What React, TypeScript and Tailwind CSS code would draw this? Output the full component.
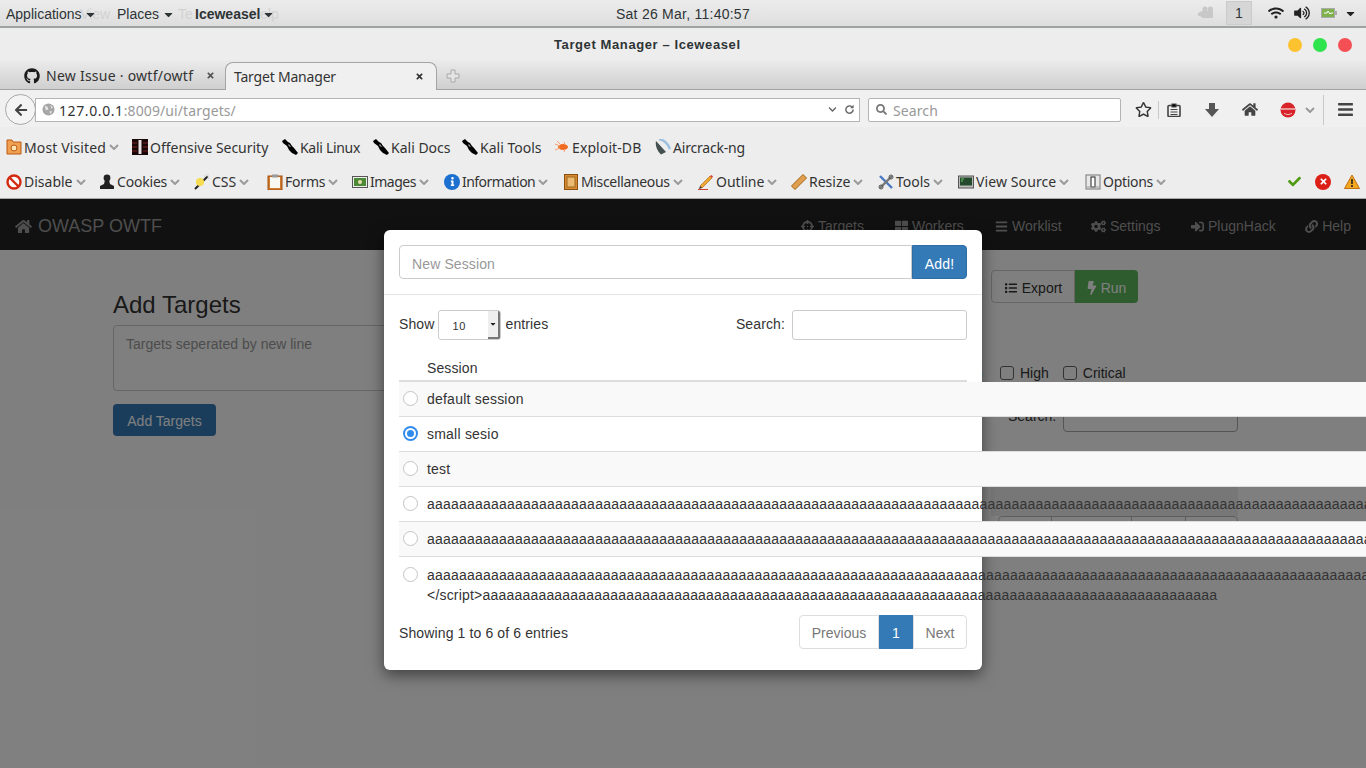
import type { ReactNode } from 'react';
import {
  FaArrowLeft,
  FaBars,
  FaBolt,
  FaCaretDown,
  FaCheck,
  FaChevronDown,
  FaCogs,
  FaCrosshairs,
  FaGithub,
  FaHome,
  FaInfo,
  FaLink,
  FaList,
  FaRegStar,
  FaSearch,
  FaSignInAlt,
  FaThLarge,
  FaTimes,
  FaVolumeUp,
  FaWifi,
} from 'react-icons/fa';

const chromeFont = 'font-["Noto_Sans",sans-serif]';

function Chevron({ className = '' }: { className?: string }) {
  return (
    <svg viewBox="0 0 10 6" className={`w-[10px] h-[6px] shrink-0 ${className}`}>
      <path d="M1 1l4 4 4-4" fill="none" stroke="#9a9a9a" strokeWidth="2" />
    </svg>
  );
}

function KaliIcon() {
  return (
    <svg viewBox="0 0 16 16" className="w-4 h-4">
      <path d="M0 2l3-2 3 3 2 1 2 3 2 2 4 5-2 2-4-2-3-3-2-4-4-3z" fill="#000" />
      <path d="M6 6l1-1 2 3-1 0z" fill="#999" />
    </svg>
  );
}

function FolderIcon() {
  return (
    <svg viewBox="0 0 16 16" className="w-4 h-4">
      <path d="M1 1h5l1 2h8v12H1z" fill="#f0a050" stroke="#b85a10" />
      <circle cx="8" cy="9" r="3" fill="#fde0b0" stroke="#b85a10" />
    </svg>
  );
}

function OffsecIcon() {
  return (
    <svg viewBox="0 0 16 16" className="w-4 h-4">
      <rect width="16" height="16" fill="#1a0808" />
      <path d="M0 4h5M0 8h5M0 12h5M11 4h5M11 8h5M11 12h5" stroke="#7a2020" />
      <rect x="6.5" y="1" width="3" height="14" fill="#e8e0e0" />
    </svg>
  );
}

function ExploitIcon() {
  return (
    <svg viewBox="0 0 16 16" className="w-4 h-4">
      <ellipse cx="9" cy="8" rx="5" ry="3" fill="#f06a20" />
      <path d="M1 5l5 2M1 11l5-2M3 2l4 4M10 3l1 3M10 13l1-3" stroke="#f8a070" strokeWidth="1" />
    </svg>
  );
}

function AircrackIcon() {
  return (
    <svg viewBox="0 0 16 16" className="w-4 h-4">
      <path d="M1 2l10 11-5 2.5C2 12 0 6 1 2z" fill="#44504f" />
      <path d="M4 0c5 1 9 5 11 10" fill="none" stroke="#9cc0e0" strokeWidth="2.4" />
    </svg>
  );
}

function DisableIcon() {
  return (
    <svg viewBox="0 0 16 16" className="w-4 h-4">
      <circle cx="8" cy="8" r="6.5" fill="#fff" stroke="#d42a10" strokeWidth="2.4" />
      <path d="M3.5 3.5l9 9" stroke="#d42a10" strokeWidth="2.4" />
    </svg>
  );
}

function CookieIcon() {
  return (
    <svg viewBox="0 0 16 16" className="w-4 h-4">
      <circle cx="8" cy="4" r="3.4" fill="#222" />
      <path d="M6 6h4l1 4 4 2v3H1v-3l4-2z" fill="#222" />
    </svg>
  );
}

function CssIcon() {
  return (
    <svg viewBox="0 0 16 16" className="w-4 h-4">
      <path d="M1 15L14 2" stroke="#222" strokeWidth="2" />
      <path d="M10 2L14 1 15 5" stroke="#ddd" strokeWidth="1.5" fill="none" />
      <circle cx="6" cy="8" r="4" fill="#f6dc50" />
    </svg>
  );
}

function FormsIcon() {
  return (
    <svg viewBox="0 0 16 16" className="w-4 h-4">
      <rect x="1" y="2" width="14" height="14" fill="#d07a30" stroke="#a05010" />
      <rect x="3" y="3" width="10" height="11" fill="#f8f8f0" />
      <rect x="5" y="0.5" width="6" height="3" fill="#999" />
    </svg>
  );
}

function ImagesIcon() {
  return (
    <svg viewBox="0 0 16 16" className="w-4 h-4">
      <rect x="0.5" y="2.5" width="15" height="11" fill="#eee" stroke="#555" />
      <rect x="2" y="4" width="12" height="8" fill="#4c8a38" />
      <circle cx="8" cy="8" r="2" fill="#e8e0b0" />
    </svg>
  );
}

function InfoIcon() {
  return (
    <span className="w-4 h-4 rounded-full bg-[#1c70d0] flex items-center justify-center">
      <FaInfo className="w-[9px] h-[9px] text-white" />
    </span>
  );
}

function MiscIcon() {
  return (
    <svg viewBox="0 0 16 16" className="w-4 h-4">
      <rect x="1.5" y="0.5" width="13" height="15" fill="#d88a30" stroke="#8a5010" />
      <rect x="4" y="3" width="8" height="10" fill="#eaba70" stroke="#a06820" />
    </svg>
  );
}

function OutlineIcon() {
  return (
    <svg viewBox="0 0 16 16" className="w-4 h-4">
      <path d="M2 12L12 2l2 2L4 14z" fill="#f0a830" stroke="#a06010" strokeWidth="0.6" />
      <path d="M12 2l2 2 1-1.5L13.5 1z" fill="#e04040" />
      <path d="M0 15.5h10" stroke="#d04030" />
      <path d="M2 12l-1 3 3-1z" fill="#333" />
    </svg>
  );
}

function ResizeIcon() {
  return (
    <svg viewBox="0 0 16 16" className="w-4 h-4">
      <path d="M0.5 12L12 0.5 15.5 4 4 15.5z" fill="#e0a050" stroke="#a06010" />
    </svg>
  );
}

function ToolsIcon() {
  return (
    <svg viewBox="0 0 16 16" className="w-4 h-4">
      <path d="M2 2l12 12" stroke="#4a78c0" strokeWidth="2.4" />
      <path d="M14 2L2 14" stroke="#777" strokeWidth="2.4" />
      <circle cx="13" cy="3" r="2" fill="none" stroke="#555" />
      <circle cx="3" cy="13" r="2" fill="none" stroke="#555" />
    </svg>
  );
}

function SourceIcon() {
  return (
    <svg viewBox="0 0 16 16" className="w-4 h-4">
      <rect x="0.5" y="2" width="15" height="12" fill="#bbb" stroke="#555" />
      <rect x="2" y="3.5" width="12" height="8" fill="#234a2c" />
      <path d="M3 5h3M3 7h2" stroke="#80e080" strokeWidth="0.8" />
    </svg>
  );
}

function OptionsIcon() {
  return (
    <svg viewBox="0 0 16 16" className="w-4 h-4">
      <rect x="1" y="1" width="14" height="14" fill="#e8e8e8" stroke="#777" />
      <rect x="6" y="3" width="4" height="10" fill="#fff" stroke="#222" />
      <path d="M2 13h12" stroke="#999" />
    </svg>
  );
}

function Bookmark({
  icon,
  label,
  chevron,
  className,
  labelClass = '',
}: {
  icon: ReactNode;
  label: string;
  chevron?: boolean;
  className: string;
  labelClass?: string;
}) {
  return (
    <div className={`flex items-center gap-[2px] shrink-0 ${className}`}>
      {icon}
      <span className={`whitespace-nowrap ${labelClass}`}>{label}</span>
      {chevron && <Chevron className="ml-[1px]" />}
    </div>
  );
}

function TopBar() {
  return (
    <div className="relative h-[28px] shrink-0 flex items-center bg-gradient-to-b from-[#ececec] to-[#dedede] border-b-2 border-[#9fa3a0] font-['Liberation_Sans',sans-serif] text-[14px] text-[#2e3436]">
      {/* terminal menu showing through the panel */}
      <div className="absolute left-[80px] top-[4px] text-[#d2d2d2] whitespace-nowrap flex">
        <span className="w-[98px]">View</span>
        <span className="w-[72px]">Te</span>
        <span>Help</span>
      </div>
      <div className="relative flex items-center ml-[6px] w-[111px] pt-[2px]">
        <span>Applications</span>
        <FaCaretDown className="ml-[2px] w-[13px] h-[13px]" />
      </div>
      <div className="relative flex items-center w-[78px] pt-[2px]">
        <span>Places</span>
        <FaCaretDown className="ml-[3px] w-[13px] h-[13px]" />
      </div>
      <div className="relative flex items-center font-bold pt-[2px]">
        <span>Iceweasel</span>
        <FaCaretDown className="ml-[2px] w-[13px] h-[13px]" />
      </div>
      <span className="absolute left-[616px] top-[4px] tracking-[0.25px] whitespace-nowrap">Sat 26 Mar, 11:40:57</span>
      <div className="ml-auto flex items-center">
        <svg viewBox="0 0 16 14" className="w-[16px] h-[14px]">
          <path d="M0 7l4-2v6l-4-1.5z" fill="#c8c8c8" />
          <rect x="4" y="5" width="11" height="7" fill="#c8c8c8" />
          <circle cx="7" cy="3" r="2.6" fill="#c8c8c8" />
          <circle cx="12.4" cy="3" r="2.6" fill="#c8c8c8" />
        </svg>
        <div className="ml-[12px] w-[26px] h-[24px] bg-[#d6d6d6] border border-[#cbcbcb] flex items-center justify-center pt-[1px]">1</div>
        <FaWifi className="ml-[16px] w-[16px] h-[14px] text-[#222]" />
        <FaVolumeUp className="ml-[10px] w-[16px] h-[14px] text-[#222]" />
        <svg viewBox="0 0 16 12" className="ml-[11px] w-[16px] h-[12px]">
          <rect x="0.5" y="1.5" width="13" height="9" fill="#7eb04c" stroke="#aaa" />
          <rect x="14" y="4" width="2" height="4" fill="#aaa" />
          <path d="M3 6h3l1-2 2 3 1-1h2" stroke="#fff" fill="none" />
        </svg>
        <FaCaretDown className="ml-[7px] mr-[9px] w-[13px] h-[13px] text-[#222]" />
      </div>
    </div>
  );
}

function TitleAndTabs() {
  return (
    <div className={`h-[62px] shrink-0 flex flex-col bg-gradient-to-b from-[#ededed] from-50% to-[#cfcfcf] border-b border-[#a4a4a4] ${chromeFont}`}>
      <div className="h-[34px] flex items-center relative">
        <span className="ml-[554px] text-[13px] font-bold text-[#2e3436] font-['Liberation_Sans',sans-serif] tracking-[0.6px] whitespace-nowrap">Target Manager – Iceweasel</span>
        <div className="ml-auto mr-[14px] flex gap-[11px]">
          <span className="w-[14px] h-[14px] rounded-full bg-[#fdc22f]" />
          <span className="w-[14px] h-[14px] rounded-full bg-[#2fe34c]" />
          <span className="w-[14px] h-[14px] rounded-full bg-[#f44f55]" />
        </div>
      </div>
      <div className="flex-1 flex items-end text-[14px] text-[#333]">
        <div className="ml-[24px] w-[201px] h-[27px] flex items-center">
          <FaGithub className="w-[16px] h-[16px] text-[#1a1a1a]" />
          <span className="ml-[6px] tracking-[0.25px] whitespace-nowrap">New Issue · owtf/owtf</span>
          <FaTimes className="ml-auto mr-[10px] w-[9px] h-[9px] text-[#555]" />
        </div>
        <div className="w-[212px] h-[28px] -mb-px flex items-center bg-[#f0f0f0] border border-b-0 border-[#a4a4a4] rounded-t-[8px] px-[8px]">
          <span className="tracking-[-0.2px]">Target Manager</span>
          <FaTimes className="ml-auto mr-[4px] w-[9px] h-[9px] text-[#333]" />
        </div>
        <div className="ml-[9px] h-[27px] flex items-center">
          <svg viewBox="0 0 14 14" className="w-[14px] h-[14px]">
            <path d="M5 1h4v4h4v4H9v4H5V9H1V5h4z" fill="#e4e4e4" stroke="#a8a8a8" />
          </svg>
        </div>
      </div>
    </div>
  );
}

function NavBar() {
  return (
    <div className={`h-[37px] shrink-0 relative flex items-center bg-[#f0f0f0] pt-[2px] text-[14px] ${chromeFont}`}>
      <div className="absolute left-[5px] top-[4px] w-[31px] h-[31px] rounded-full bg-[#f4f4f4] border border-[#a8a8a8] flex items-center justify-center">
        <FaArrowLeft className="w-[14px] h-[14px] text-[#444]" />
      </div>
      <div className="ml-[35px] w-[825px] h-[24px] bg-white border border-[#b4b4b4] flex items-center pl-[6px] pr-[4px]">
        <svg viewBox="0 0 14 14" className="w-[13px] h-[13px] shrink-0">
          <circle cx="7" cy="7" r="6.5" fill="#a6a6a6" />
          <path d="M3 3l3 1 1 3-3 1zM9 2l3 3-2 1zM8 9l3 0-2 3z" fill="#e4e4e4" />
        </svg>
        <span className="ml-[4px] mt-[2px] tracking-[0.6px] text-[#333]">127.0.0.1<span className="text-[#999] tracking-[0.1px]">:8009/ui/targets/</span></span>
        <FaChevronDown className="ml-auto w-[9px] h-[9px] text-[#666]" />
        <svg viewBox="0 0 12 12" className="ml-[7px] w-[11px] h-[11px]">
          <path d="M10 6a4 4 0 1 1-1.2-2.8" fill="none" stroke="#666" strokeWidth="1.6" />
          <path d="M10.5 0.8v3.8H6.7z" fill="#666" />
        </svg>
      </div>
      <div className="ml-[8px] w-[253px] h-[24px] bg-white border border-[#b4b4b4] rounded-[2px] flex items-center pl-[7px] text-[#999]">
        <FaSearch className="w-[11px] h-[11px] text-[#777]" />
        <span className="ml-[6px] mt-[2px] tracking-[0.1px]">Search</span>
      </div>
      <FaRegStar className="ml-[14px] w-[17px] h-[17px] text-[#333]" />
      <span className="ml-[6px] w-px h-[18px] bg-[#c8c8c8]" />
      <svg viewBox="0 0 14 14" className="ml-[8px] w-[14px] h-[14px]">
        <rect x="1" y="2.5" width="12" height="11" rx="1" fill="none" stroke="#444" strokeWidth="1.6" />
        <path d="M5 1h4v3H5zM3.5 6.5h7M3.5 9h7M3.5 11.5h7" stroke="#444" strokeWidth="1.2" />
      </svg>
      <svg viewBox="0 0 14 14" className="ml-[24px] w-[14px] h-[14px]">
        <path d="M4 0h6v6h4l-7 8-7-8h4z" fill="#555" />
      </svg>
      <FaHome className="ml-[23px] w-[16px] h-[15px] text-[#444]" />
      <svg viewBox="0 0 16 16" className="ml-[22px] w-[16px] h-[16px]">
        <circle cx="8" cy="8" r="7.5" fill="#d8232a" />
        <path d="M1 7h14" stroke="#f4c8c8" strokeWidth="1.4" />
        <path d="M4 11c2 2 6 2 8 0" stroke="#f4c8c8" fill="none" />
      </svg>
      <Chevron className="ml-[9px]" />
      <span className="ml-[8px] w-px h-[30px] bg-[#c8c8c8]" />
      <FaBars className="ml-[13px] w-[17px] h-[17px] text-[#444]" />
    </div>
  );
}

function BookmarksBar() {
  return (
    <div className={`h-[38px] shrink-0 flex items-center bg-[#ededed] pl-[6px] pt-[2px] text-[14px] text-[#333] ${chromeFont}`}>
      <Bookmark icon={<FolderIcon />} label="Most Visited" chevron className="w-[126px]" labelClass="tracking-[0.12px]" />
      <Bookmark icon={<OffsecIcon />} label="Offensive Security" className="w-[150px]" labelClass="tracking-[-0.02px]" />
      <Bookmark icon={<KaliIcon />} label="Kali Linux" className="w-[91px]" labelClass="tracking-[-0.3px]" />
      <Bookmark icon={<KaliIcon />} label="Kali Docs" className="w-[89px]" />
      <Bookmark icon={<KaliIcon />} label="Kali Tools" className="w-[92px]" />
      <Bookmark icon={<ExploitIcon />} label="Exploit-DB" className="w-[101px]" labelClass="tracking-[0.1px]" />
      <Bookmark icon={<AircrackIcon />} label="Aircrack-ng" className="w-[95px]" labelClass="tracking-[-0.2px]" />
    </div>
  );
}

function DevToolbar() {
  return (
    <div className={`h-[34px] shrink-0 flex items-center bg-[#ededed] border-b border-[#a8a8a8] pl-[6px] text-[14px] text-[#333] ${chromeFont}`}>
      <Bookmark icon={<DisableIcon />} label="Disable" chevron className="w-[93px]" />
      <Bookmark icon={<CookieIcon />} label="Cookies" chevron className="w-[95px]" labelClass="tracking-[-0.2px]" />
      <Bookmark icon={<CssIcon />} label="CSS" chevron className="w-[73px]" />
      <Bookmark icon={<FormsIcon />} label="Forms" chevron className="w-[85px]" labelClass="tracking-[-0.2px]" />
      <Bookmark icon={<ImagesIcon />} label="Images" chevron className="w-[92px]" labelClass="tracking-[-0.5px]" />
      <Bookmark icon={<InfoIcon />} label="Information" chevron className="w-[119px]" labelClass="tracking-[-0.55px]" />
      <Bookmark icon={<MiscIcon />} label="Miscellaneous" chevron className="w-[135px]" labelClass="tracking-[-0.35px]" />
      <Bookmark icon={<OutlineIcon />} label="Outline" chevron className="w-[93px]" />
      <Bookmark icon={<ResizeIcon />} label="Resize" chevron className="w-[87px]" />
      <Bookmark icon={<ToolsIcon />} label="Tools" chevron className="w-[80px]" />
      <Bookmark icon={<SourceIcon />} label="View Source" chevron className="w-[127px]" labelClass="tracking-[0.1px]" />
      <Bookmark icon={<OptionsIcon />} label="Options" chevron className="w-[100px]" labelClass="tracking-[-0.3px]" />
      <div className="ml-auto mr-[6px] flex items-center gap-[13px]">
        <FaCheck className="w-[15px] h-[13px] text-[#4f9a10]" />
        <span className="w-[16px] h-[16px] rounded-full bg-[#dc2018] flex items-center justify-center">
          <FaTimes className="w-[9px] h-[9px] text-white" />
        </span>
        <svg viewBox="0 0 16 15" className="w-[16px] h-[15px]">
          <path d="M8 1l7.5 13.5H.5z" fill="#f4a820" stroke="#c07010" />
          <path d="M8 5v5M8 11v2" stroke="#222" strokeWidth="1.6" />
        </svg>
      </div>
    </div>
  );
}

const siteLinks = [
  { icon: <FaCrosshairs className="w-[13px] h-[13px]" />, label: 'Targets', className: 'w-[94px]' },
  { icon: <FaThLarge className="w-[13px] h-[13px]" />, label: 'Workers', className: 'w-[100px]' },
  { icon: <FaBars className="w-[13px] h-[13px]" />, label: 'Worklist', className: 'w-[96px]' },
  { icon: <FaCogs className="w-[15px] h-[13px]" />, label: 'Settings', className: 'w-[100px]' },
  { icon: <FaSignInAlt className="w-[13px] h-[13px]" />, label: 'PlugnHack', className: 'w-[114px]' },
  { icon: <FaLink className="w-[14px] h-[13px]" />, label: 'Help', className: 'w-[46px]' },
];

function SitePage() {
  return (
    <div className="h-full bg-white font-['Liberation_Sans',sans-serif] text-[14px] text-[#333]">
      <div className="h-[51px] bg-[#222] flex items-center pt-[4px] text-[#9d9d9d]">
        <div className="ml-[15px] flex items-center gap-[6px] text-[18px]">
          <FaHome className="w-[17px] h-[15px]" />
          <span>OWASP OWTF</span>
        </div>
        <div className="ml-auto flex">
          {siteLinks.map((link) => (
            <div key={link.label} className={`flex items-center gap-[4px] ${link.className}`}>
              {link.icon}
              <span>{link.label}</span>
            </div>
          ))}
        </div>
        <div className="w-[15px]" />
      </div>
      <div className="flex">
        <div className="ml-[113px] w-[400px] pt-[40px]">
          <h1 className="text-[24px] leading-[29px]">Add Targets</h1>
          <div className="mt-[6px] h-[66px] border border-[#ccc] rounded-[4px] px-[12px] py-[6px] text-[#999] leading-[24px]">Targets seperated by new line</div>
          <div className="mt-[13px] w-[103px] h-[32px] rounded-[4px] bg-[#337ab7] text-white flex items-center justify-center pt-[3px]">Add Targets</div>
        </div>
        <div className="ml-[478px] w-[247px] pt-[20px]">
          <div className="flex h-[33px]">
            <div className="w-[84px] border border-[#ccc] rounded-l-[4px] flex items-center justify-center gap-[4px] pt-[3px]">
              <FaList className="w-[14px] h-[12px]" />
              Export
            </div>
            <div className="w-[63px] bg-[#5cb85c] text-white rounded-r-[4px] flex items-center justify-center gap-[4px] pt-[3px]">
              <FaBolt className="w-[10px] h-[14px]" />
              Run
            </div>
          </div>
          <div className="mt-[60px] h-[20px] flex items-center">
            <span className="-ml-[16px] w-[9px] pt-[1px]">n</span>
            <span className="ml-[16px] w-[14px] h-[14px] border border-[#666] rounded-[3px]" />
            <span className="ml-[6px] pt-[1px]">High</span>
            <span className="ml-[14px] w-[14px] h-[14px] border border-[#666] rounded-[3px]" />
            <span className="ml-[6px] pt-[1px]">Critical</span>
          </div>
          <div className="mt-[17px] flex items-center ml-[17px]">
            <span>Search:</span>
            <div className="ml-[7px] w-[175px] h-[32px] border border-[#aaa] rounded-[4px]" />
          </div>
          <div className="mt-[55px] h-[29px] w-[247px] bg-[#eee]" />
          <div className="ml-[7px] flex h-[20px] border border-[#bbb] rounded-t-[4px]">
            <div className="w-[53px] border-r border-[#bbb]" />
            <div className="w-[80px] border-r border-[#bbb]" />
            <div className="w-[54px] border-r border-[#bbb]" />
          </div>
        </div>
      </div>
    </div>
  );
}

const sessions = [
  { name: 'default session', checked: false },
  { name: 'small sesio', checked: true },
  { name: 'test', checked: false },
  { name: 'a'.repeat(119), checked: false },
  { name: 'a'.repeat(119), checked: false },
];

function Radio({ checked }: { checked: boolean }) {
  if (checked) {
    return (
      <span className="mt-[2px] w-[15px] h-[15px] rounded-full bg-[#2f8cec] flex items-center justify-center shrink-0">
        <span className="w-[11px] h-[11px] rounded-full bg-white flex items-center justify-center">
          <span className="w-[7px] h-[7px] rounded-full bg-[#2f8cec]" />
        </span>
      </span>
    );
  }
  return <span className="mt-[2px] w-[15px] h-[15px] rounded-full bg-white border border-[#c4c4c4] shrink-0" />;
}

function SessionModal() {
  return (
    <div className="absolute left-[384px] top-[31px] w-[598px] h-[440px] bg-white rounded-[6px] shadow-[0_5px_15px_rgba(0,0,0,0.5)] font-['Liberation_Sans',sans-serif] text-[14px] text-[#333] tracking-[0.12px]">
      <div className="h-[65px] border-b border-[#e5e5e5] px-[15px] pt-[15px]">
        <div className="flex h-[34px]">
          <div className="flex-1 border border-[#ccc] rounded-l-[4px] px-[12px] pt-[4px] flex items-center text-[#999]">New Session</div>
          <div className="w-[55px] bg-[#337ab7] border border-[#2e6da4] rounded-r-[4px] pt-[4px] text-white flex items-center justify-center">Add!</div>
        </div>
      </div>
      <div className="px-[15px]">
        <div className="mt-[15px] h-[30px] flex items-center">
          <span className="-mt-[2px]">Show</span>
          <div className="ml-[3px] w-[63px] h-[30px] border border-[#ccc] rounded-[3px] flex items-center overflow-hidden">
            <span className="ml-[14px] mt-[3px] text-[11px] tracking-[0.5px] flex-1">10</span>
            <div className="w-[12px] h-full bg-[#eee] border-r-2 border-b-2 border-[#777] flex items-center justify-center">
              <FaCaretDown className="w-[8px] h-[8px] text-[#222]" />
            </div>
          </div>
          <span className="ml-[5px] -mt-[2px]">entries</span>
          <span className="ml-auto -mt-[2px]">Search:</span>
          <div className="ml-[7px] w-[175px] h-[30px] border border-[#ccc] rounded-[3px]" />
        </div>
        <div className="mt-[14px] h-[28px] pl-[28px] pt-[2px] border-b-2 border-[#ddd] flex items-center leading-[20px]">Session</div>
        {sessions.map((session, i) => (
          <div
            key={i}
            className={`h-[35px] w-[1000px] border-b border-[#ddd] flex pt-[7px] pl-[4px] gap-[9px] whitespace-nowrap leading-[20px] tracking-[0.22px] ${i % 2 === 0 ? 'bg-[#f9f9f9]' : ''}`}
          >
            <Radio checked={session.checked} />
            <span>{session.name}</span>
          </div>
        ))}
        <div className="w-[1000px] flex pt-[8px] pl-[4px] gap-[9px] whitespace-nowrap leading-[20px] tracking-[0.2px]">
          <Radio checked={false} />
          <div>
            <div>{'a'.repeat(119)}</div>
            <div>{'</script>' + 'a'.repeat(92)}</div>
          </div>
        </div>
        <div className="mt-[10px] flex items-center justify-between">
          <span className="pt-[2px]">Showing 1 to 6 of 6 entries</span>
          <div className="flex h-[34px] tracking-normal">
            <div className="w-[80px] border border-[#ddd] rounded-l-[4px] pt-[3px] text-[#777] flex items-center justify-center">Previous</div>
            <div className="w-[34px] bg-[#337ab7] pt-[3px] text-white flex items-center justify-center">1</div>
            <div className="w-[54px] border border-[#ddd] rounded-r-[4px] pt-[3px] text-[#777] flex items-center justify-center">Next</div>
          </div>
        </div>
      </div>
    </div>
  );
}

export default function App() {
  return (
    <div className="w-[1366px] h-[768px] overflow-hidden flex flex-col bg-white">
      <TopBar />
      <TitleAndTabs />
      <NavBar />
      <BookmarksBar />
      <DevToolbar />
      <div className="flex-1 relative overflow-hidden">
        <SitePage />
        <div className="absolute inset-0 bg-black/50" />
        <SessionModal />
      </div>
    </div>
  );
}
